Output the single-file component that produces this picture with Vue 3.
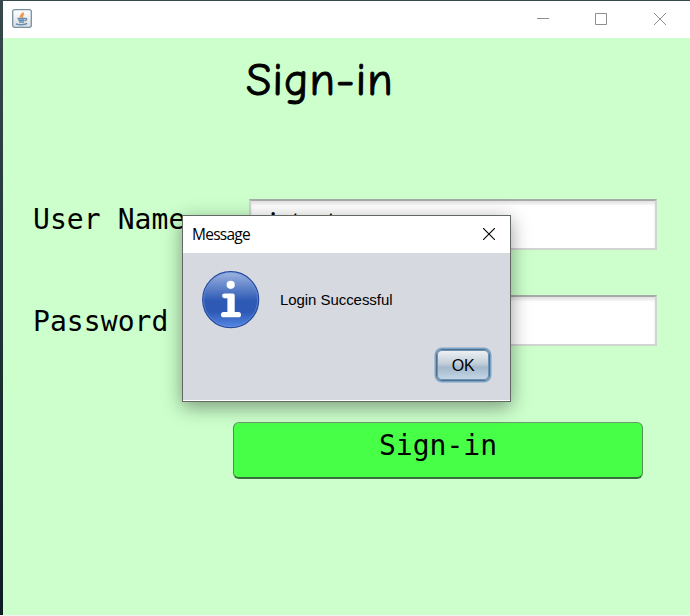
<script setup>
import { ref } from 'vue'

const username = ref('intest')
const password = ref('')
</script>

<template>
  <main class="desktop">
    <section class="window">
      <header class="titlebar">
        <svg class="java" viewBox="0 0 20 19" aria-hidden="true">
          <defs>
            <linearGradient id="tile" x2="0" y2="1">
              <stop offset="0" stop-color="#fff" />
              <stop offset="1" stop-color="#d9dde1" />
            </linearGradient>
          </defs>
          <rect x=".7" y=".7" width="18.6" height="17.6" rx="2" fill="url(#tile)" stroke="#7890a2" stroke-width="1.3" />
          <path d="M10.8 3.2c1.2 1.8-3.8 2.7-1.8 5.3M12 5.2c-2.2 1-2.2 1.8-1.2 3.4" fill="none" stroke="#ee9650" stroke-width="1.7" />
          <path d="M5.4 9.5h7.6M6.3 11.3h6M7 13h5M13 9.7c2.4-.7 2 1.7-.3 2.3M4 14.6c1 1.6 9.3 1.5 11-.3" fill="none" stroke="#668daf" stroke-width="1.4" />
        </svg>
        <svg class="controls" viewBox="0 0 132 14" aria-hidden="true">
          <path d="M0 6.5h12M58.5 1.5h11v11h-11zM117 1l12 12M129 1l-12 12" fill="none" stroke="#8e8e8e" />
        </svg>
      </header>
      <form class="client" @submit.prevent>
        <h1>Sign-in</h1>
        <label class="row first"><span>User Name</span><input v-model="username" type="text" /></label>
        <label class="row second"><span>Password</span><input v-model="password" type="password" /></label>
        <button class="signin">Sign-in</button>
      </form>
    </section>

    <section class="dialog" role="dialog">
      <header class="dialog-title">
        <span>Message</span>
        <svg viewBox="0 0 12 12" width="12" height="12" aria-hidden="true"><path d="M0 0l12 12M12 0L0 12" stroke="#000" stroke-width="1.1" /></svg>
      </header>
      <div class="message">
        <svg viewBox="0 0 58 58" width="58" height="58" aria-hidden="true">
          <defs>
            <linearGradient id="info" x2="0" y2="1">
              <stop offset="0" stop-color="#a0b5e2" />
              <stop offset=".25" stop-color="#6788cb" />
              <stop offset=".52" stop-color="#2e5ab5" />
              <stop offset=".72" stop-color="#2e5ab5" />
              <stop offset="1" stop-color="#5688e6" />
            </linearGradient>
          </defs>
          <circle cx="28.7" cy="28.7" r="28" fill="url(#info)" stroke="#244a9c" stroke-width="1.2" />
          <circle cx="28.7" cy="28.7" r="27" fill="none" stroke="#7197df" stroke-width=".8" opacity=".7" />
          <circle cx="28.7" cy="13.8" r="4.1" fill="#fff" />
          <path d="M22.5 22.4h8c1.4 0 2.2.8 2.2 2.2v16.5h3.7a2.6 2.6 0 0 1 0 5.2H21.6a2.6 2.6 0 0 1 0-5.2h3.8V27.2h-2.9a2.4 2.4 0 0 1 0-4.8z" fill="#fff" />
        </svg>
        <span>Login Successful</span>
      </div>
      <footer><button class="ok">OK</button></footer>
    </section>
  </main>
</template>

<style>
body { margin: 0; overflow: hidden; }
</style>

<style scoped>
* { box-sizing: border-box; }
.desktop {
  position: relative;
  width: 690px;
  height: 616px;
  padding: 1px 0 1px 3px;
  background: linear-gradient(#36494b, #1d3232 55%, #0d1c20 99.8%, #eef5ee 99.8%);
}
.window { height: 614px; background: #cfc; }
.titlebar {
  display: flex;
  justify-content: space-between;
  height: 37px;
  padding: 8px 21px 0 9px;
  background: #fff;
}
.java { width: 20px; height: 19px; }
.controls { width: 132px; height: 14px; margin-top: 3px; }
.client { display: flex; flex-direction: column; }
h1 {
  height: 80px;
  margin: 0 0 0 243px;
  padding-top: 9px;
  font: 400 46px/68px "Comic Sans MS", "Comic Neue", Lato, sans-serif;
  letter-spacing: 1.1px;
  -webkit-text-stroke: 1px #000;
  paint-order: stroke;
}
.row {
  display: grid;
  grid-template-columns: 216px 408px;
  height: 51px;
  padding-left: 30px;
  font: 28px/41px Consolas, "DejaVu Sans Mono", monospace;
}
.first { margin-top: 81px; }
.second { margin-top: 45px; }
.second span { padding-top: 6px; }
.row span { letter-spacing: .08px; }
input {
  width: 408px;
  height: 51px;
  padding: 0 0 6px 19px;
  border: 2px solid #d2d4d2;
  border-top-color: #a5aaa5;
  border-radius: 0;
  outline: 0;
  background: #fff;
  box-shadow: inset 0 3px 3px #e5e5e5;
  font: 26px "Comic Sans MS", Lato, sans-serif;
  letter-spacing: .4px;
}
.signin {
  width: 410px;
  height: 57px;
  margin: 76px 0 0 230px;
  padding: 0 0 8px;
  border: 1.5px solid #558d58;
  border-top-color: #6d9a70;
  border-bottom: 2px solid #386e3c;
  border-radius: 6px;
  background: #48ff48;
  font: 28px/34px Consolas, "DejaVu Sans Mono", monospace;
  color: #000;
}
.dialog {
  position: absolute;
  left: 182px;
  top: 215px;
  width: 329px;
  height: 187px;
  border: 1px solid #626862;
  background: #d6d9e0;
  box-shadow: 0 5px 18px rgba(0, 0, 0, .4);
}
.dialog-title {
  display: flex;
  justify-content: space-between;
  align-items: center;
  height: 37px;
  padding: 0 15px 2px 9px;
  background: #fff;
  font: 15.5px "Segoe UI", "Open Sans", sans-serif;
}
.dialog-title span { letter-spacing: -.75px; padding-top: 1px; }
.message {
  display: flex;
  gap: 20px;
  align-items: center;
  padding: 18px 0 0 19px;
  font: 15px Arial, "Liberation Sans", sans-serif;
}
.message svg { flex: none; }
.message span { padding-bottom: 2px; letter-spacing: -.06px; }
footer {
  display: flex;
  justify-content: flex-end;
  height: 72px;
  padding: 20px 20px 0 0;
  border-bottom: 1px solid #fff;
}
.ok {
  width: 54px;
  height: 32px;
  padding: 2px 0 0;
  border: 1.5px solid #526f8b;
  border-radius: 6px;
  background: linear-gradient(#f0f3f6, #c2ced9 45%, #a4b9cc 58%, #c4d8e8);
  box-shadow: 0 0 0 1.5px #78a4c9, inset 0 0 0 1px #6c91b2;
  font: 16px Arial, "Liberation Sans", sans-serif;
  letter-spacing: -.3px;
  color: #000;
}
</style>
